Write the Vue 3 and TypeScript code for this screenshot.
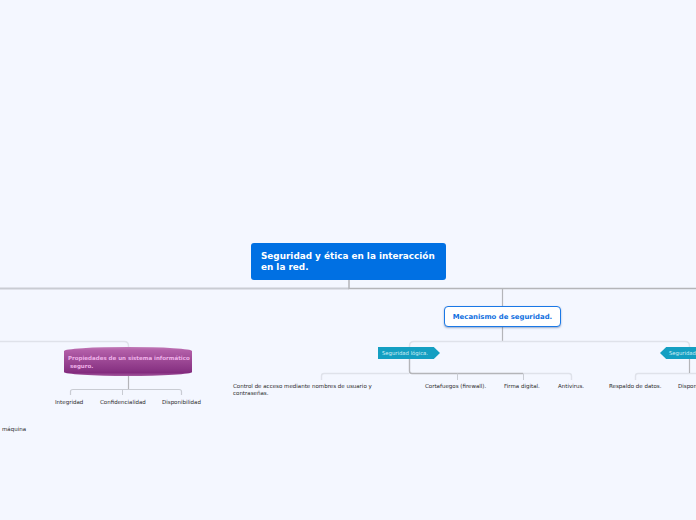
<script setup lang="ts">
interface Label { text: string; x: number; y: number; w?: number }
interface Line { d: string; c: string; w: number }

const labels: Label[] = [
  { text: 'máquina', x: 2, y: 426 },
  { text: 'Integridad', x: 55, y: 399 },
  { text: 'Confidencialidad', x: 100, y: 399 },
  { text: 'Disponibilidad', x: 162, y: 399 },
  { text: 'Control de acceso mediante nombres de usuario y contraseñas.', x: 233, y: 383, w: 146 },
  { text: 'Cortafuegos (firewall).', x: 425, y: 383 },
  { text: 'Firma digital.', x: 504, y: 383 },
  { text: 'Antivirus.', x: 558, y: 383 },
  { text: 'Respaldo de datos.', x: 609, y: 383 },
  { text: 'Disponibilidad', x: 678, y: 383 }
]

const light = '#dfe2ea'
const mid = '#c9ccd3'
const dark = '#b4b5b9'

const lines: Line[] = [
  { d: 'M0 288.5H349', c: mid, w: 2 },
  { d: 'M349 280V288.5H696', c: dark, w: 1.5 },
  { d: 'M502.5 288.5V307', c: dark, w: 1.2 },
  { d: 'M502.5 327V341', c: dark, w: 1.2 },
  { d: 'M0 341.5H124Q128.5 341.5 128.5 346V348', c: light, w: 1.5 },
  { d: 'M409.5 348V346Q409.5 341.5 414 341.5H685Q689.5 341.5 689.5 346V348', c: light, w: 1.5 },
  { d: 'M321.5 380V376Q321.5 373.5 324 373.5H409', c: light, w: 1.4 },
  { d: 'M523 373.5H569Q571.5 373.5 571.5 376V380', c: light, w: 1.4 },
  { d: 'M409.5 359V371Q409.5 373.5 412 373.5H523', c: dark, w: 1.4 },
  { d: 'M457.5 373.5V380M523.5 373.5V380', c: mid, w: 1 },
  { d: 'M635.5 380V376Q635.5 373.5 638 373.5H696', c: light, w: 1.4 },
  { d: 'M689.5 359V373', c: dark, w: 1.2 },
  { d: 'M128.5 375V389', c: dark, w: 1.2 },
  { d: 'M70.5 395V391.5Q70.5 389.5 73 389.5H179Q181.5 389.5 181.5 391.5V395', c: mid, w: 1.2 },
  { d: 'M122.5 389.5V395', c: mid, w: 1 }
]
</script>

<template>
  <main class="canvas">
    <svg class="wires" width="696" height="520" viewBox="0 0 696 520" fill="none" aria-hidden="true">
      <path v-for="(l, i) in lines" :key="i" :d="l.d" :stroke="l.c" :stroke-width="l.w" />
    </svg>

    <div class="node root">Seguridad y ética en la interacción<br />en la red.</div>
    <div class="node mech">Mecanismo de seguridad.</div>

    <div class="node prop">
      <span>Propiedades de un sistema informático<br />&nbsp;seguro.</span>
    </div>

    <div class="node tag tag-left">Seguridad lógica.</div>
    <div class="node tag tag-right">Seguridad física.</div>

    <div
      v-for="l in labels"
      :key="l.text"
      class="label"
      :style="{ left: l.x + 'px', top: l.y + 'px', width: l.w ? l.w + 'px' : 'auto' }"
    >{{ l.text }}</div>
  </main>
</template>

<style scoped>
.canvas {
  position: relative;
  width: 696px;
  height: 520px;
  overflow: hidden;
  background: #f4f7ff;
  font-family: "DejaVu Sans", Verdana, sans-serif;
}
.wires {
  position: absolute;
  left: 0;
  top: 0;
}
.node {
  position: absolute;
  box-sizing: border-box;
}
.root {
  left: 251px;
  top: 243px;
  width: 195px;
  height: 37px;
  padding: 7.5px 10px;
  background: #0070e3;
  border-radius: 3px;
  color: #fff;
  font-size: 8.85px;
  font-weight: 700;
  line-height: 11px;
  white-space: nowrap;
}
.mech {
  left: 444px;
  top: 306px;
  width: 117px;
  height: 21px;
  background: #fff;
  border: 1.5px solid #1a78e6;
  border-radius: 4px;
  box-shadow: 0 1px 2px rgba(40, 80, 140, .45);
  color: #0f6fe0;
  font-size: 6.9px;
  font-weight: 700;
  line-height: 20px;
  text-align: center;
  white-space: nowrap;
}
.prop {
  left: 64px;
  top: 347px;
  width: 128px;
  height: 29px;
  padding: 6.5px 4px 0;
  border-radius: 50% / 4px;
  background: linear-gradient(#c07ab6 0, #b25ea8 12%, #a04c98 40%, #8a3585 78%, #832b7e 88%, #a45a9e 100%);
  color: #efb0e8;
  font-size: 5.5px;
  font-weight: 700;
  line-height: 8.2px;
  white-space: nowrap;
}
.tag {
  top: 347px;
  height: 12px;
  background: #149fc2;
  color: #d8f1f7;
  font-size: 5.3px;
  line-height: 12px;
  white-space: nowrap;
}
.tag-left {
  left: 378px;
  width: 62px;
  padding-left: 4px;
  clip-path: polygon(0 0, 90% 0, 100% 50%, 90% 100%, 0 100%);
}
.tag-right {
  left: 660px;
  width: 62px;
  padding-left: 9px;
  clip-path: polygon(10% 0, 100% 0, 100% 100%, 10% 100%, 0 50%);
}
.label {
  position: absolute;
  color: #2a2a2a;
  font-size: 5.5px;
  line-height: 6.5px;
  white-space: normal;
}
</style>
